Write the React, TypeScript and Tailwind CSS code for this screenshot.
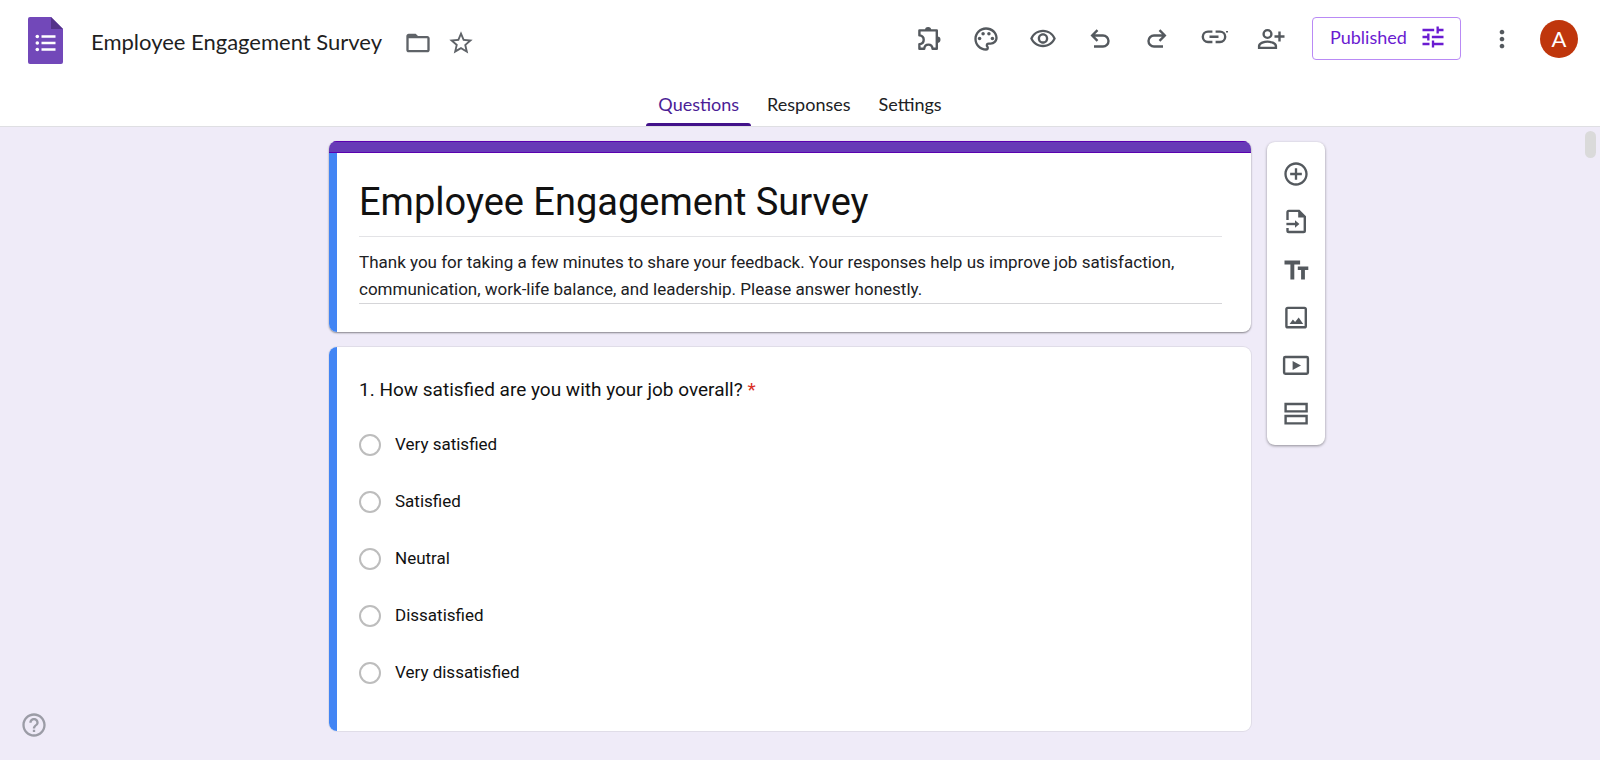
import { useState } from 'react';
import type { ReactNode } from 'react';
import {
  MdAddCircleOutline,
  MdFolderOpen,
  MdHelpOutline,
  MdMoreVert,
  MdOutlinePalette,
  MdOutlineVisibility,
  MdStarBorder,
  MdTune,
} from 'react-icons/md';

const tabs = ['Questions', 'Responses', 'Settings'];
const options = ['Very satisfied', 'Satisfied', 'Neutral', 'Dissatisfied', 'Very dissatisfied'];

const Icon = ({ children }: { children: ReactNode }) => (
  <svg viewBox="0 0 28 28" className="size-7" fill="none" stroke="currentColor" strokeWidth="2.4" aria-hidden="true">
    {children}
  </svg>
);

const FormsLogo = () => (
  <svg viewBox="0 0 35 47" className="w-[35px] h-[47px] shrink-0" aria-hidden="true">
    <path d="M2 0h21l12 12v33a2 2 0 0 1-2 2H2a2 2 0 0 1-2-2V2a2 2 0 0 1 2-2z" fill="#7248b9" />
    <path d="M23 0l12 12H23z" fill="#54328a" />
    <g fill="#fff">
      <circle cx="9.3" cy="19.5" r="1.8" />
      <circle cx="9.3" cy="26" r="1.8" />
      <circle cx="9.3" cy="32.5" r="1.8" />
      <path d="M13.5 18.2h14v2.6h-14zM13.5 24.7h14v2.6h-14zM13.5 31.2h14v2.6h-14z" />
    </g>
  </svg>
);

const PuzzleIcon = () => (
  <Icon>
    <path
      d="M4.4 5.4h17.4v18.4h-4.2c-.3-2.8-2-4.2-4.2-4.2s-3.9 1.4-4.2 4.2H4.4v-4.6c2.9-.3 4.3-2.1 4.3-4.4s-1.4-4.1-4.3-4.4z"
      strokeLinejoin="round"
    />
    <path d="M10 5a3 3 0 0 1 6.2 0zM22.4 11.6a3.1 3.1 0 0 1 0 6.2z" fill="currentColor" stroke="none" />
  </Icon>
);

const UndoIcon = () => (
  <Icon>
    <path d="M6.5 10.5H17a5.5 5.5 0 0 1 0 11H8M11.5 5.2L6.2 10.5l5.3 5.3" />
  </Icon>
);

const RedoIcon = () => (
  <Icon>
    <path d="M21.5 10.5H11a5.5 5.5 0 0 0 0 11h9M16.5 5.2l5.3 5.3-5.3 5.3" />
  </Icon>
);

const LinkIcon = () => (
  <Icon>
    <path d="M12.4 6.6H8a5.2 5.2 0 0 0 0 10.4h4.4M15.6 6.6H20a5.2 5.2 0 0 1 0 10.4h-4.4M9.5 11.8h9" />
    <path d="M26 6.8h2" strokeWidth="1.6" />
  </Icon>
);

const PersonAddIcon = () => (
  <Icon>
    <circle cx="10.5" cy="9" r="3.9" />
    <path d="M2.1 22.9v-1.8c0-3 5.6-4.5 8.4-4.5s8.4 1.5 8.4 4.5v1.8zM22.5 6.5v10M17.5 11.5h10" />
  </Icon>
);

const ImportIcon = () => (
  <Icon>
    <path d="M5.5 12V4.2c0-.8.5-1.3 1.3-1.3H17l5.8 5.8v14c0 .8-.5 1.3-1.3 1.3H6.8c-.8 0-1.3-.5-1.3-1.3V20" />
    <path d="M16.2 2.2l7.4 7.4h-7.4z" fill="currentColor" stroke="none" />
    <path d="M4.4 16H14" />
    <path d="M13 12.2l4.4 3.8-4.4 3.8z" fill="currentColor" stroke="none" />
  </Icon>
);

const TitleIcon = () => (
  <Icon>
    <path d="M2.5 4.5h15.6V8.4h-5.8v15.1H8.4V8.4H2.5zM15.8 10.4h10.5v3.7h-3.4v9.4h-3.8v-9.4h-3.3z" fill="currentColor" stroke="none" />
  </Icon>
);

const ImageIcon = () => (
  <Icon>
    <rect x="4.4" y="3.9" width="19.4" height="19.4" rx="1.4" />
    <path d="M7.6 20l3.3-4.4 2.2 2.5 3.6-4.5 4.5 6.4z" fill="currentColor" stroke="none" />
  </Icon>
);

const VideoIcon = () => (
  <Icon>
    <rect x="2.1" y="5" width="23.8" height="16.8" rx="1.2" />
    <path d="M10.6 8.9l8.4 4.5-8.4 4.5z" fill="currentColor" stroke="none" />
  </Icon>
);

const SectionIcon = () => (
  <Icon>
    <path d="M3.6 4h21v7.4h-21zM3.6 16h21v7.4h-21z" />
  </Icon>
);

const headerActions = [
  { label: 'Add-ons', icon: <PuzzleIcon /> },
  { label: 'Customize theme', icon: <MdOutlinePalette size={28} /> },
  { label: 'Preview', icon: <MdOutlineVisibility size={28} /> },
  { label: 'Undo', icon: <UndoIcon /> },
  { label: 'Redo', icon: <RedoIcon /> },
  { label: 'Copy responder link', icon: <LinkIcon /> },
  { label: 'Share', icon: <PersonAddIcon /> },
];

const tools = [
  { label: 'Add question', icon: <MdAddCircleOutline size={28} /> },
  { label: 'Import questions', icon: <ImportIcon /> },
  { label: 'Add title and description', icon: <TitleIcon /> },
  { label: 'Add image', icon: <ImageIcon /> },
  { label: 'Add video', icon: <VideoIcon /> },
  { label: 'Add section', icon: <SectionIcon /> },
];

const Header = () => {
  const [active, setActive] = useState('Questions');

  return (
    <header className="bg-white border-b border-[#dfdfe3] font-['Lato',sans-serif]">
      <div className="flex items-start justify-between h-[86px] pl-7 pr-[22px]">
        <div className="flex items-start pt-[17px]">
          <FormsLogo />
          <input
            aria-label="Form name"
            defaultValue="Employee Engagement Survey"
            className="ml-7 mt-2 w-[300px] h-8 text-[22px] text-[#1f1f1f] outline-none"
          />
          <button aria-label="Move to folder" className="ml-[13px] mt-3 text-[#5f6368]">
            <MdFolderOpen size={28} />
          </button>
          <button aria-label="Star" className="ml-[15px] mt-3 text-[#5f6368]">
            <MdStarBorder size={28} />
          </button>
        </div>
        <div className="flex items-center pt-[17px] text-[#54595e]">
          <div className="flex gap-[29px]">
            {headerActions.map((action) => (
              <button key={action.label} aria-label={action.label}>
                {action.icon}
              </button>
            ))}
          </div>
          <button className="flex items-center justify-between ml-[27px] w-[149px] h-[43px] pl-[17px] pr-[13px] pb-[3px] border border-[#b98af5] rounded text-lg text-[#6a1bd1]">
            Published
            <MdTune size={28} />
          </button>
          <button aria-label="More" className="ml-[27px]">
            <MdMoreVert size={28} />
          </button>
          <button aria-label="Account" className="ml-6 size-[38px] rounded-full bg-[#bf360c] text-[22px] text-white">
            A
          </button>
        </div>
      </div>
      <nav className="flex justify-center gap-1">
        {tabs.map((tab) => (
          <button
            key={tab}
            onClick={() => setActive(tab)}
            className={
              tab === active
                ? 'flex flex-col items-center h-10 text-lg text-[#4b1d96]'
                : 'flex flex-col items-center h-10 text-lg text-[#202124]'
            }
          >
            <span className="flex-1 px-3 leading-9">{tab}</span>
            {tab === active && <span className="w-full h-[3px] rounded-t bg-[#42128a]" />}
          </button>
        ))}
      </nav>
    </header>
  );
};

const TitleCard = () => (
  <section className="overflow-hidden bg-white rounded-lg shadow-[0_1px_2px_rgba(0,0,0,0.45)]">
    <div className="h-3 bg-[#673ab7] border-y border-[#5a00b0]" />
    <div className="border-l-8 border-[#4285f4] pl-[22px] pr-[29px] pt-5 pb-7">
      <input
        aria-label="Form title"
        defaultValue="Employee Engagement Survey"
        className="block w-full h-[64px] pb-1.5 text-[38px] text-[#111] border-b border-[#e3e3e6] outline-none"
      />
      <textarea
        aria-label="Form description"
        rows={2}
        defaultValue="Thank you for taking a few minutes to share your feedback. Your responses help us improve job satisfaction, communication, work-life balance, and leadership. Please answer honestly."
        className="block w-full h-[67px] pt-3 text-[17px] leading-[27px] text-[#202124] border-b border-[#d5d5d8] resize-none overflow-hidden outline-none"
      />
    </div>
  </section>
);

const QuestionCard = () => (
  <section className="overflow-hidden bg-white rounded-lg shadow-[0_0_0_1px_#e0dde8]">
    <fieldset className="border-l-8 border-[#4285f4] pl-[22px] pr-[29px] pt-7 pb-[30px]">
      <legend className="float-left w-full text-[19px] leading-[30px] text-[#111]">
        1. How satisfied are you with your job overall? <span className="text-[#d93025]">*</span>
      </legend>
      <div className="clear-both pt-[11px]">
        {options.map((option) => (
          <label key={option} className="flex items-center gap-[14px] h-[57px] text-[17px] text-[#111]">
            <input type="radio" name="satisfaction" className="appearance-none size-[22px] rounded-full border-2 border-[#bdbdbd] bg-white" />
            {option}
          </label>
        ))}
      </div>
    </fieldset>
  </section>
);

const Toolbar = () => (
  <aside className="w-[58px] pt-2 pb-[7px] ml-4 mt-px bg-white rounded-lg shadow-[0_1px_3px_rgba(0,0,0,0.4)] text-[#54595e]">
    {tools.map((tool) => (
      <button key={tool.label} aria-label={tool.label} className="flex items-center justify-center w-full h-12">
        {tool.icon}
      </button>
    ))}
  </aside>
);

const App = () => (
  <div className="relative flex flex-col min-h-screen bg-[#efebf8] font-['Roboto',sans-serif]">
    <Header />
    <main className="grid grid-cols-[1fr_minmax(0,922px)_1fr] items-start pt-[14px] pb-7 pr-5">
      <div className="flex flex-col col-start-2 gap-[15px]">
        <TitleCard />
        <QuestionCard />
      </div>
      <Toolbar />
    </main>
    <div className="absolute right-1 top-[131px] w-[11px] h-[27px] rounded-full bg-[#dadada]" />
    <button aria-label="Help" className="absolute left-5 bottom-[21px] text-[#9b9ca6]">
      <MdHelpOutline size={28} />
    </button>
  </div>
);

export default App;
